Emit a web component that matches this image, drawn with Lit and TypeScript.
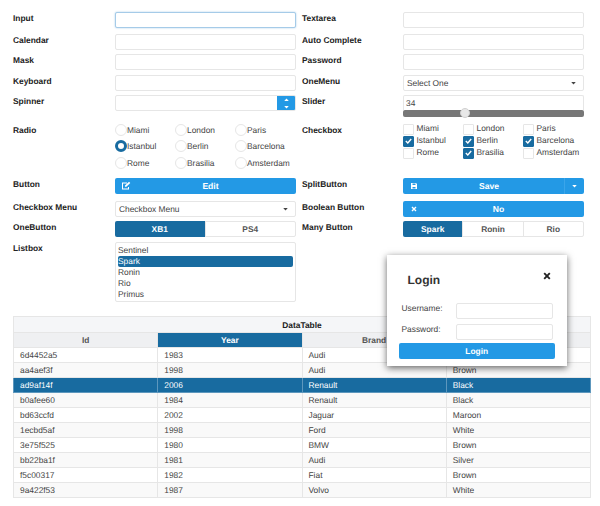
// Showcase of form widgets with a data table and a login dialog on top
import { css, html, LitElement, svg } from "lit";
import { customElement } from "lit/decorators.js";

const RADIOS = ["Miami", "London", "Paris", "Istanbul", "Berlin", "Barcelona", "Rome", "Brasilia", "Amsterdam"];
const CHECKED = new Set(["Istanbul", "Berlin", "Barcelona", "Brasilia"]);
const LISTBOX = ["Sentinel", "Spark", "Ronin", "Rio", "Primus"];

// first row's last cell sits behind the dialog and can't be read
const CARS = [
  ["6d4452a5", "1983", "Audi", ""],
  ["aa4aef3f", "1998", "Audi", "Brown"],
  ["ad9af14f", "2006", "Renault", "Black"],
  ["b0afee60", "1984", "Renault", "Black"],
  ["bd63ccfd", "2002", "Jaguar", "Maroon"],
  ["1ecbd5af", "1998", "Ford", "White"],
  ["3e75f525", "1980", "BMW", "Brown"],
  ["bb22ba1f", "1981", "Audi", "Silver"],
  ["f5c00317", "1982", "Fiat", "Brown"],
  ["9a422f53", "1987", "Volvo", "White"],
];

const caret = svg`<svg class="caret" width="5" height="3" viewBox="0 0 6 4"><path d="M0 0h6L3 3.4z" fill="currentColor"/></svg>`;

@customElement("app-root")
export class AppRoot extends LitElement {
  static styles = css`
    :host {
      display: block;
      position: relative;
      width: 600px;
      height: 506px;
      overflow: hidden;
      background: #fff;
      color: #222;
      font-family: "Liberation Sans", Arial, sans-serif;
      font-size: 8.4px;
      text-rendering: geometricPrecision;
    }

    .form {
      display: grid;
      grid-template-columns: 102px 181px 6px 101px 181px;
      grid-template-rows: 22px 20px 21px 20px 29px 54px 23px 20px 21px 60px;
      padding: 12px 0 0 13px;
    }

    .lbl {
      font-weight: bold;
      line-height: 13px;
    }

    .right {
      grid-column: 4;
    }

    .input {
      box-sizing: border-box;
      height: 16px;
      background: #fff;
      border: 1px solid #e6e6e6;
      border-radius: 2px;
    }

    .input.focus {
      border-color: #a5cbe8;
      box-shadow: 0 0 2px #a5cbe8;
    }

    .spinner {
      display: flex;
      justify-content: flex-end;
      overflow: hidden;
    }

    .spin {
      width: 19px;
      margin: -1px;
      background: #2399e5;
      color: #fff;
      display: flex;
      flex-direction: column;
      align-items: center;
      justify-content: space-between;
      padding: 3px 0 2px;
      box-sizing: border-box;
      border-radius: 0 2px 2px 0;
    }

    .spin svg:first-child {
      transform: rotate(180deg);
    }

    .select {
      display: flex;
      align-items: center;
      justify-content: space-between;
      padding: 0 7px 0 3px;
      color: #444;
    }

    .slider-cell {
      display: flex;
      flex-direction: column;
    }

    .slider-value {
      height: 15px;
      line-height: 15px;
      padding-left: 2px;
      border-bottom: 0;
      border-radius: 2px 2px 0 0;
      color: #444;
    }

    .track {
      position: relative;
      height: 7px;
      background: #777;
      border-radius: 2px;
    }

    .thumb {
      position: absolute;
      left: 57px;
      top: -2px;
      width: 10px;
      height: 10px;
      border-radius: 50%;
      background: #e8e8e8;
      border: 1px solid #d0d0d0;
      box-sizing: border-box;
    }

    .choices {
      display: grid;
      grid-template-columns: 60px 60px 60px;
      color: #444;
    }

    .radios {
      grid-auto-rows: 16.3px;
      margin-top: -2px;
    }

    .checks {
      grid-auto-rows: 12.2px;
      margin-top: -1px;
    }

    .choice {
      display: flex;
      align-items: center;
      white-space: nowrap;
    }

    .checks .choice span.name {
      margin-top: -2px;
    }

    .radio {
      box-sizing: border-box;
      flex: none;
      width: 12px;
      height: 12px;
      border: 1px solid #e6e6e6;
      border-radius: 50%;
      background: #fff;
    }

    .radio.on {
      border: 3.5px solid #186ba0;
    }

    .box {
      box-sizing: border-box;
      flex: none;
      width: 11px;
      height: 11px;
      margin-right: 2.5px;
      border: 1px solid #e6e6e6;
      border-radius: 1px;
      background: #fff;
      display: flex;
      align-items: center;
      justify-content: center;
    }

    .box.on {
      background: #186ba0;
      border-color: #186ba0;
    }

    .btn {
      box-sizing: border-box;
      position: relative;
      height: 16px;
      display: flex;
      align-items: center;
      justify-content: center;
      background: #2399e5;
      color: #fff;
      font-weight: bold;
      font-size: 8.6px;
      border-radius: 2px;
    }

    .btn.with-icon {
      padding-left: 10px;
    }

    .btn.with-split {
      padding-right: 19px;
    }

    .btn .icon {
      position: absolute;
      left: 6px;
      top: 3px;
    }

    .btn .icon.small {
      left: 7px;
      top: 4px;
    }

    .split {
      position: absolute;
      top: 0;
      right: 0;
      bottom: 0;
      width: 19px;
      display: flex;
      align-items: center;
      justify-content: center;
      border-left: 1px solid #3aa5ea;
    }

    .group {
      display: flex;
      height: 16px;
      box-sizing: border-box;
      border: 1px solid #e6e6e6;
      border-radius: 2px;
      font-weight: bold;
      font-size: 8.4px;
      color: #555;
    }

    .group div {
      flex: 1;
      display: flex;
      align-items: center;
      justify-content: center;
      border-left: 1px solid #e6e6e6;
    }

    .group div:first-child {
      border-left: 0;
      margin: -1px 0 -1px -1px;
      background: #186ba0;
      color: #fff;
      border-radius: 2px 0 0 2px;
    }

    .listbox {
      box-sizing: border-box;
      height: 60px;
      padding: 2px 2px;
      border: 1px solid #e6e6e6;
      border-radius: 2px;
      color: #444;
      line-height: 11px;
    }

    .listbox .sel {
      background: #186ba0;
      color: #fff;
      border-radius: 2px;
    }

    .table {
      position: absolute;
      left: 13px;
      top: 316px;
      width: 578px;
      border-collapse: collapse;
      table-layout: fixed;
      color: #444;
    }

    .table th,
    .table td {
      height: 15px;
      padding: 0;
      border: 1px solid #e6e6e6;
      box-sizing: border-box;
      line-height: 14px;
    }

    .table th {
      background: #eff0f2;
      color: #555;
    }

    .table .cap {
      background: #f5f6f8;
      color: #222;
      height: 16px;
    }

    .table th.sorted {
      background: #186ba0;
      color: #fff;
    }

    .table td {
      padding-left: 6px;
    }

    .table tbody tr:nth-child(even) td {
      background: #f9f9f9;
    }

    .table tr.sel td {
      background: #186ba0 !important;
      color: #fff;
      border-color: #5d97bd;
    }

    .dialog {
      position: absolute;
      left: 387px;
      top: 255px;
      width: 180px;
      height: 111px;
      box-sizing: border-box;
      background: #fff;
      box-shadow: 0 2px 7px rgba(0, 0, 0, 0.6);
      display: flex;
      flex-direction: column;
      padding: 0 12px 0 11.5px;
    }

    .dlg-head {
      display: flex;
      justify-content: space-between;
      height: 45px;
      padding: 19px 4px 0 9px;
      box-sizing: border-box;
    }

    .dlg-title {
      font-size: 12px;
      font-weight: bold;
      color: #333;
      line-height: 13px;
    }

    .close {
      margin-top: -2px;
    }

    .dlg-row {
      display: flex;
      justify-content: space-between;
      align-items: center;
      height: 21px;
      padding: 0 2px 0 3px;
      color: #444;
    }

    .dlg-row span {
      margin-bottom: 6px;
    }

    .dlg-row .input {
      width: 97px;
    }

    .dlg-btn {
      margin-top: 1px;
      font-size: 8.4px;
    }
  `;

  private renderRadio(name: string) {
    return html`<div class="choice"><span class="radio ${name === "Istanbul" ? "on" : ""}"></span>${name}</div>`;
  }

  private renderCheck(name: string) {
    const on = CHECKED.has(name);
    return html`<div class="choice">
      <span class="box ${on ? "on" : ""}">
        ${on ? svg`<svg width="7" height="6" viewBox="0 0 7 6"><path d="M.8 3l2 2L6.2 1" fill="none" stroke="#fff" stroke-width="1.4"/></svg>` : ""}
      </span><span class="name">${name}</span>
    </div>`;
  }

  render() {
    return html`
      <div class="form">
        <div class="lbl">Input</div>
        <div class="input focus"></div>
        <div class="lbl right">Textarea</div>
        <div class="input"></div>

        <div class="lbl">Calendar</div>
        <div class="input"></div>
        <div class="lbl right">Auto Complete</div>
        <div class="input"></div>

        <div class="lbl">Mask</div>
        <div class="input"></div>
        <div class="lbl right">Password</div>
        <div class="input"></div>

        <div class="lbl">Keyboard</div>
        <div class="input"></div>
        <div class="lbl right">OneMenu</div>
        <div class="input select"><span>Select One</span>${caret}</div>

        <div class="lbl">Spinner</div>
        <div class="input spinner">
          <div class="spin">${caret}${caret}</div>
        </div>
        <div class="lbl right">Slider</div>
        <div class="slider-cell">
          <div class="input slider-value">34</div>
          <div class="track"><div class="thumb"></div></div>
        </div>

        <div class="lbl">Radio</div>
        <div class="choices radios">${RADIOS.map((r) => this.renderRadio(r))}</div>
        <div class="lbl right">Checkbox</div>
        <div class="choices checks">${RADIOS.map((r) => this.renderCheck(r))}</div>

        <div class="lbl">Button</div>
        <div class="btn with-icon">
          <svg class="icon" width="10" height="9" viewBox="0 0 10 9">
            <path d="M1 1.5h5v1H2v5h5V6h1v2.5H1zM4 4.5L8 .7l1.3 1.2L5.3 5.7H4z" fill="#fff"/>
          </svg>
          Edit
        </div>
        <div class="lbl right">SplitButton</div>
        <div class="btn with-icon with-split">
          <svg class="icon small" width="8" height="8" viewBox="0 0 8 8">
            <path d="M1 1h5l1 1v5H1zM2.500 1.500v1.500h3V1.500zM2.500 5v1.500h3V5z" fill="#fff" fill-rule="evenodd"/>
          </svg>
          Save
          <span class="split">${caret}</span>
        </div>

        <div class="lbl">Checkbox Menu</div>
        <div class="input select"><span>Checkbox Menu</span>${caret}</div>
        <div class="lbl right">Boolean Button</div>
        <div class="btn with-icon">
          <svg class="icon small" width="8" height="8" viewBox="0 0 8 8">
            <path d="M2 2l4 4M6 2L2 6" stroke="#fff" stroke-width="1.4"/>
          </svg>
          No
        </div>

        <div class="lbl">OneButton</div>
        <div class="group"><div>XB1</div><div>PS4</div></div>
        <div class="lbl right">Many Button</div>
        <div class="group"><div>Spark</div><div>Ronin</div><div>Rio</div></div>

        <div class="lbl">Listbox</div>
        <div class="listbox">
          ${LISTBOX.map((item) => html`<div class=${item === "Spark" ? "sel" : ""}>${item}</div>`)}
        </div>
      </div>

      <table class="table">
        <thead>
          <tr><th class="cap" colspan="4">DataTable</th></tr>
          <tr><th>Id</th><th class="sorted">Year</th><th>Brand</th><th></th></tr>
        </thead>
        <tbody>
          ${CARS.map(
            (car) => html`<tr class=${car[0] === "ad9af14f" ? "sel" : ""}>${car.map((v) => html`<td>${v}</td>`)}</tr>`,
          )}
        </tbody>
      </table>

      <div class="dialog">
        <div class="dlg-head">
          <span class="dlg-title">Login</span>
          <svg class="close" width="8" height="8" viewBox="0 0 8 8">
            <path d="M1.2 1.2l5.6 5.6M6.8 1.2L1.2 6.8" stroke="#222" stroke-width="1.9"/>
          </svg>
        </div>
        <div class="dlg-row"><span>Username:</span><div class="input"></div></div>
        <div class="dlg-row"><span>Password:</span><div class="input"></div></div>
        <div class="btn dlg-btn">Login</div>
      </div>
    `;
  }
}
